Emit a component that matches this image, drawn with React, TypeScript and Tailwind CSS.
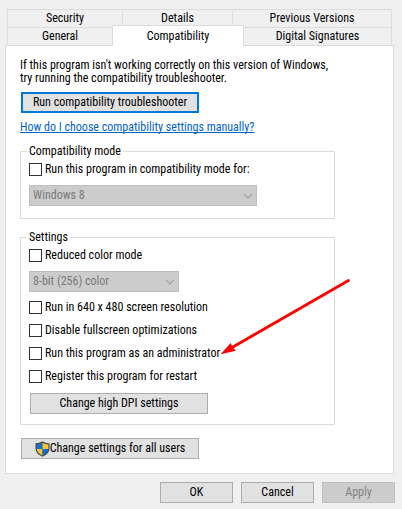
import type { ReactNode } from 'react';
import { clsx } from 'clsx';

const OPTIONS = [
  'Run in 640 x 480 screen resolution',
  'Disable fullscreen optimizations',
  'Run this program as an administrator',
  'Register this program for restart',
];

const App = () => {
  return (
    <div className="min-h-screen bg-[#f0f0f0] pt-[9px] pr-2 pb-1.5 pl-[5px] font-['Roboto_Condensed','Liberation_Sans_Narrow','Roboto',sans-serif] text-[12px] leading-[13px] text-black">
      <Tabs />

      <main className="-mt-px border border-[#dcdcdc] bg-white pt-[13px] pr-[58px] pb-3.5 pl-3.5">
        <p className="whitespace-nowrap">
          If this program isn't working correctly on this version of Windows,
          <br />
          try running the compatibility troubleshooter.
        </p>

        <Button className="mt-[7px] ml-px w-[178px] outline-2 -outline-offset-2 outline-[#0078d7]">
          Run compatibility troubleshooter
        </Button>

        <a
          href="#manual"
          className="mt-2 block w-fit whitespace-nowrap text-[#0066cc] underline underline-offset-1 [text-decoration-skip-ink:none]"
        >
          How do I choose compatibility settings manually?
        </a>

        <Group title="Compatibility mode" className="mt-[11px] pb-3">
          <CheckOption label="Run this program in compatibility mode for:" />
          <Dropdown label="Compatibility mode version" value="Windows 8" className="w-[228px]" />
        </Group>

        <div className="relative mt-3">
          <Group title="Settings" className="pb-2.5">
            <CheckOption label="Reduced color mode" />
            <Dropdown label="Color depth" value="8-bit (256) color" className="w-[150px]" />
            <div className="mt-[9px] flex flex-col gap-2.5">
              {OPTIONS.map((option) => (
                <CheckOption key={option} label={option} />
              ))}
            </div>
            <Button className="mt-2.5 ml-px w-[178px]">Change high DPI settings</Button>
          </Group>
          <Arrow />
        </div>

        <Button className="mt-[13px] ml-px w-[178px]">
          <Shield />
          Change settings for all users
        </Button>
      </main>

      <footer className="mt-2 -mr-px flex justify-end gap-2">
        <Button className="w-[73px]">OK</Button>
        <Button className="w-[73px]">Cancel</Button>
        <Button className="w-[73px]" disabled>
          Apply
        </Button>
      </footer>
    </div>
  );
};

export default App;

const TAB = 'border border-[#dcdcdc] text-center';

const Tabs = () => (
  <nav className="mr-0.5 ml-0.5" role="tablist">
    <div className="flex">
      <button role="tab" className={clsx(TAB, 'h-[19px] w-[116px]')}>
        Security
      </button>
      <button role="tab" className={clsx(TAB, '-ml-px h-[19px] w-[111px]')}>
        Details
      </button>
      <button role="tab" className={clsx(TAB, '-ml-px h-[19px] flex-1')}>
        Previous Versions
      </button>
    </div>
    <div className="-mt-px flex items-end">
      <button role="tab" className={clsx(TAB, 'h-[19px] w-[106px]')}>
        General
      </button>
      <button
        role="tab"
        aria-selected="true"
        className="relative z-10 -mt-0.5 -ml-px h-[21px] w-[132px] border border-b-0 border-[#dcdcdc] bg-white"
      >
        Compatibility
      </button>
      <button role="tab" className={clsx(TAB, '-ml-px h-[19px] flex-1')}>
        Digital Signatures
      </button>
    </div>
  </nav>
);

type ButtonProps = { children: ReactNode; className?: string; disabled?: boolean };

const Button = ({ children, className, disabled }: ButtonProps) => (
  <button
    disabled={disabled}
    className={clsx(
      'flex h-[21px] items-center justify-center border whitespace-nowrap',
      disabled ? 'border-[#bfbfbf] bg-[#cccccc] text-[#838383]' : 'border-[#adadad] bg-[#e1e1e1]',
      className
    )}
  >
    {children}
  </button>
);

type GroupProps = { title: string; children: ReactNode; className?: string };

const Group = ({ title, children, className }: GroupProps) => (
  <fieldset className={clsx('border border-[#dcdcdc] pl-2', className)}>
    <legend className="-ml-0.5 px-0.5">{title}</legend>
    <div className="pt-[5px]">{children}</div>
  </fieldset>
);

const CheckOption = ({ label }: { label: string }) => (
  <label className="flex w-fit items-center gap-[3px] whitespace-nowrap">
    <input type="checkbox" className="size-[13px] appearance-none border border-[#333333] bg-white" />
    {label}
  </label>
);

type DropdownProps = { label: string; value: string; className?: string };

const Dropdown = ({ label, value, className }: DropdownProps) => (
  <div className={clsx('relative mt-[9px]', className)}>
    <select
      aria-label={label}
      disabled
      className="block h-[21px] w-full appearance-none border border-[#bfbfbf] bg-[#cccccc] pl-[3px] text-[#7a7a7a] opacity-100"
    >
      <option>{value}</option>
    </select>
    <svg
      className="pointer-events-none absolute top-2 right-1 h-[6px] w-[10px]"
      viewBox="0 0 10 6"
      fill="none"
      stroke="#a3a3a3"
      strokeWidth="1.2"
    >
      <path d="M1 .8 5 4.8 9 .8" />
    </svg>
  </div>
);

const Shield = () => (
  <svg className="h-4 w-[15px] shrink-0" viewBox="0 0 15 16">
    <path
      d="M7.5.3C5.6 1.6 3 2.3.5 2.3v5.2c0 3.8 3 6.5 7 8.3 4-1.8 7-4.5 7-8.3V2.3C12 2.3 9.4 1.6 7.5.3Z"
      fill="#4b4f55"
    />
    <path d="M7.5 1.7C5.9 2.7 3.8 3.3 1.7 3.4V8h5.8Z" fill="#0f6fd1" />
    <path d="M7.5 1.7c1.6 1 3.7 1.6 5.8 1.7V8H7.5Z" fill="#ffc52f" />
    <path d="M1.7 8c.3 2.8 2.7 4.9 5.8 6.5V8Z" fill="#ffc52f" />
    <path d="M13.3 8c-.3 2.8-2.7 4.9-5.8 6.5V8Z" fill="#0f6fd1" />
  </svg>
);

const Arrow = () => (
  <svg
    className="pointer-events-none absolute top-[45px] left-[198px] h-[84px] w-[136px]"
    viewBox="0 0 136 84"
  >
    <path d="M130.5 4.5 14 71.5" stroke="#ff0000" strokeWidth="2.8" strokeLinecap="round" />
    <path d="M2.5 78.3 12.8 67l1.7 4.2 3.5 3.5Z" fill="#ff0000" />
  </svg>
);
